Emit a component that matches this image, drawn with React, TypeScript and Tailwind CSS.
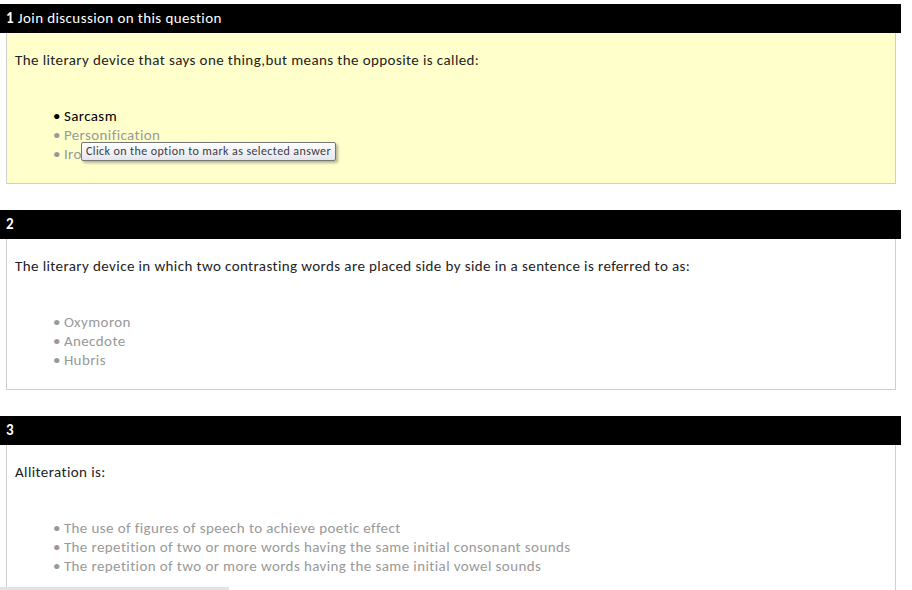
import React from 'react';

interface Question {
  num: number;
  label?: string;
  text: string;
  options: string[];
  selected?: number;
  highlight?: boolean;
}

const questions: Question[] = [
  {
    num: 1,
    label: 'Join discussion on this question',
    text: 'The literary device that says one thing,but means the opposite is called:',
    options: ['Sarcasm', 'Personification', 'Irony'],
    selected: 0,
    highlight: true,
  },
  {
    num: 2,
    text: 'The literary device in which two contrasting words are placed side by side in a sentence is referred to as:',
    options: ['Oxymoron', 'Anecdote', 'Hubris'],
  },
  {
    num: 3,
    text: 'Alliteration is:',
    options: [
      'The use of figures of speech to achieve poetic effect',
      'The repetition of two or more words having the same initial consonant sounds',
      'The repetition of two or more words having the same initial vowel sounds',
    ],
  },
];

function QuestionBlock({ q }: { q: Question }) {
  return (
    <div className="flex flex-col">
      {/* Header bar */}
      <div className="h-[29px] w-[901px] bg-black text-white text-[15px] tracking-[0.4px] leading-[29px] pl-[6px]">
        <span className="font-bold">{q.num}</span>
        {q.label && <span> {q.label}</span>}
      </div>

      {/* Body */}
      <div
        className={`relative ml-[6px] w-[890px] h-[151px] border border-t-0 border-[#cfcfcf] pl-[8px] pt-[18px] ${
          q.highlight ? 'bg-[#ffffcc]' : 'bg-white'
        }`}
      >
        <p className="text-[15px] tracking-[0.4px] leading-[19px] text-[#222]">{q.text}</p>
        <ul className="mt-[37px] pl-[38px] flex flex-col">
          {q.options.map((opt, i) => (
            <li
              key={opt}
              className={`text-[15px] tracking-[0.4px] leading-[19px] cursor-pointer ${
                q.selected === i ? 'text-black' : 'text-[#999]'
              }`}
            >
              <span className="mr-[3px]">•</span>
              {opt}
            </li>
          ))}
        </ul>

        {q.highlight && (
          <div className="absolute left-[74px] top-[109px] h-[19px] px-[4px] border border-[#767676] rounded-[2px] bg-gradient-to-b from-white to-[#e4e5f0] shadow-[2px_2px_3px_rgba(0,0,0,0.3)] text-[12px] tracking-[0.4px] leading-[17px] text-[#3c3c3c] whitespace-nowrap">
            Click on the option to mark as selected answer
          </div>
        )}
      </div>
    </div>
  );
}

export default function App() {
  return (
    <div
      className="relative w-[912px] h-[590px] overflow-hidden bg-white pt-[4px] flex flex-col gap-[26px]"
      style={{ fontFamily: 'Carlito, Lato, "Open Sans", sans-serif' }}
    >
      {questions.map((q) => (
        <QuestionBlock key={q.num} q={q} />
      ))}
      <div className="absolute left-0 bottom-0 h-[3px] w-[229px] bg-[#e3e3e3]" />
    </div>
  );
}
